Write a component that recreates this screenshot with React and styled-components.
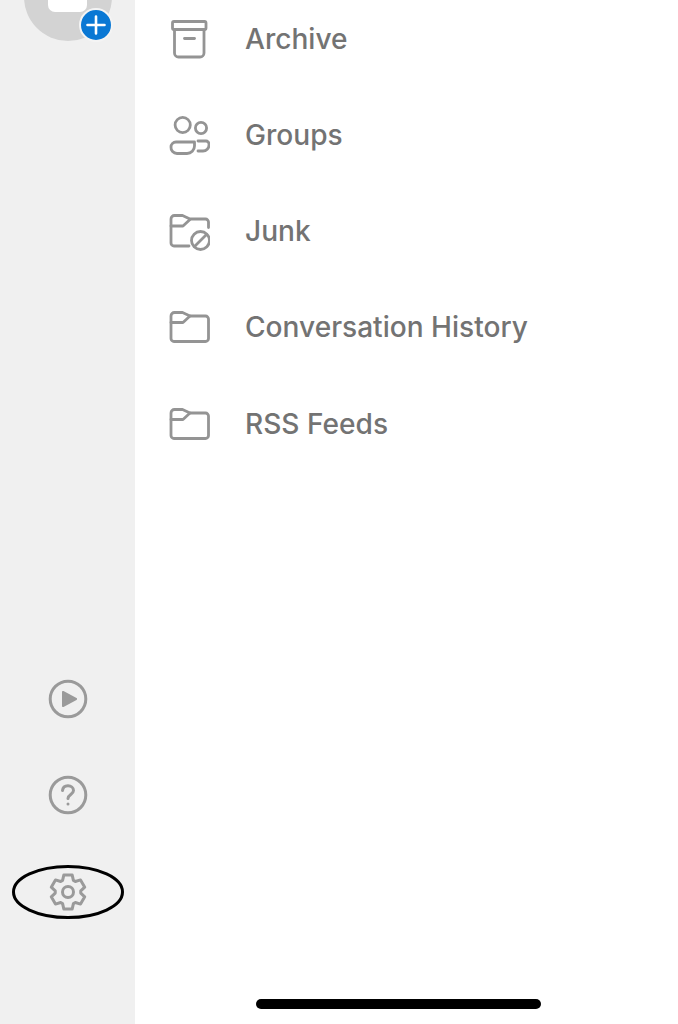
import styled, { createGlobalStyle } from "styled-components";

const GlobalStyle = createGlobalStyle`
  html, body {
    margin: 0;
    padding: 0;
    background: #fff;
  }
  body {
    font-family: Inter, "Liberation Sans", sans-serif;
  }
`;

// six blocky teeth, one pointing straight up
const gearPath = () => {
  const pts = [];
  for (let i = 0; i < 6; i++) {
    const a = -90 + i * 60;
    [[12.8, -25], [17.4, -14], [17.4, 14], [12.8, 25]].forEach(([r, d]) => {
      const t = ((a + d) * Math.PI) / 180;
      pts.push((20 + r * Math.cos(t)).toFixed(2) + " " + (20 + r * Math.sin(t)).toFixed(2));
    });
  }
  return "M" + pts.join("L") + "Z";
};

const ArchiveIcon = () => (
  <Icon viewBox="0 0 42 42">
    <rect x="4.5" y="3.5" width="33.5" height="8" rx="1.5" />
    <path d="M6.5 11.5V35a4 4 0 0 0 4 4H32a4 4 0 0 0 4-4V11.5" />
    <path d="M16.5 20.5h10" />
  </Icon>
);

const GroupsIcon = () => (
  <Icon viewBox="0 0 42 42">
    <circle cx="14.7" cy="11" r="7.6" />
    <circle cx="33" cy="14" r="5.6" />
    <path d="M8 28h18.5v4a7.5 7.5 0 0 1-7.5 7.5H9a6 6 0 0 1-6-6.5A5 5 0 0 1 8 28z" />
    <path d="M30 27h8a3 3 0 0 1 3 3v1a6 6 0 0 1-6 6h-5" />
  </Icon>
);

const JunkIcon = () => (
  <Icon viewBox="0 0 42 42">
    <path d="M21 36H6a3 3 0 0 1-3-3V9a3.5 3.5 0 0 1 3.5-3.500h8l7.500 3.500h15.500a3 3 0 0 1 3 3v5.500" />
    <path d="M3 16h12l7-6.500" />
    <circle cx="32.500" cy="30.500" r="9" />
    <path d="M26.500 36.500l12-12" />
  </Icon>
);

const FolderIcon = () => (
  <Icon viewBox="0 0 42 42">
    <path d="M3 10a3.500 3.500 0 0 1 3.500-3.500h8l7.500 3.500h15.500a3 3 0 0 1 3 3v19.500a3 3 0 0 1-3 3H6a3 3 0 0 1-3-3z" />
    <path d="M3 16.500h12l7-6.500" />
  </Icon>
);

const items = [
  { name: "Archive", icon: <ArchiveIcon /> },
  { name: "Groups", icon: <GroupsIcon /> },
  { name: "Junk", icon: <JunkIcon /> },
  { name: "Conversation History", icon: <FolderIcon /> },
  { name: "RSS Feeds", icon: <FolderIcon /> },
];

export default function App() {
  return (
    <>
      <GlobalStyle />
      <Screen>
        <Sidebar>
          <Avatar>
            <AvatarCard />
            <AddBadge>
              <svg width="20" height="20" viewBox="0 0 20 20">
                <path d="M10 1.500v17M1.500 10h17" stroke="#fff" strokeWidth="2.600" strokeLinecap="round" />
              </svg>
            </AddBadge>
          </Avatar>
          <Tools>
            <Tool>
              <RoundIcon viewBox="0 0 40 40">
                <circle cx="20" cy="20" r="17.800" />
                <path d="M14 13v14a1 1 0 0 0 1.500 .9l13-7a1 1 0 0 0 0-1.800l-13-7a1 1 0 0 0-1.500 .9z" fill="#9a9a9a" stroke="none" />
              </RoundIcon>
            </Tool>
            <Tool>
              <RoundIcon viewBox="0 0 40 40">
                <circle cx="20" cy="20" r="17.800" />
                <path d="M14.500 15.500c.3-3 2.500-4.800 5.500-4.800s5.500 2 5.500 4.800c0 4-5.500 4-5.500 8" />
                <circle cx="20" cy="29" r="1.500" fill="#9a9a9a" stroke="none" />
              </RoundIcon>
            </Tool>
            <Tool>
              <RoundIcon viewBox="0 0 40 40">
                <path d={gearPath()} />
                <circle cx="20" cy="20" r="5.500" />
              </RoundIcon>
              <Highlight viewBox="0 0 112 54">
                <ellipse cx="56" cy="27" rx="54.500" ry="25.500" />
              </Highlight>
            </Tool>
          </Tools>
        </Sidebar>
        <Main>
          <FolderList>
            {items.map((item) => (
              <Row key={item.name}>
                {item.icon}
                <Label>{item.name}</Label>
              </Row>
            ))}
          </FolderList>
          <HomeBar />
        </Main>
      </Screen>
    </>
  );
}

const Screen = styled.div`
  display: flex;
  width: 678px;
  height: 1024px;
  overflow: hidden;
  background: #fff;
`;

const Sidebar = styled.div`
  display: flex;
  flex-direction: column;
  align-items: center;
  flex: 0 0 135px;
  background: #f0f0f0;
  padding-bottom: 112.5px;
  box-sizing: border-box;
`;

const Avatar = styled.div`
  position: relative;
  display: flex;
  justify-content: center;
  width: 88px;
  height: 88px;
  margin-top: -47px;
  border-radius: 50%;
  background: #d3d3d3;
`;

const AvatarCard = styled.div`
  width: 39px;
  height: 38px;
  margin-top: 21px;
  border-radius: 7px;
  background: #fff;
`;

const AddBadge = styled.div`
  position: absolute;
  right: -1px;
  bottom: -1px;
  display: flex;
  align-items: center;
  justify-content: center;
  width: 30px;
  height: 30px;
  border: 2px solid #f4f4f4;
  border-radius: 50%;
  background: #0a78d4;
`;

const Tools = styled.div`
  display: flex;
  flex-direction: column;
  gap: 56.5px;
  margin-top: auto;
`;

const Tool = styled.div`
  position: relative;
  display: flex;
  align-items: center;
  justify-content: center;
  width: 40px;
  height: 40px;
`;

const RoundIcon = styled.svg`
  width: 40px;
  height: 40px;
  fill: none;
  stroke: #9a9a9a;
  stroke-width: 3;
  stroke-linecap: round;
  stroke-linejoin: round;
`;

const Highlight = styled.svg`
  position: absolute;
  left: -36px;
  top: -7px;
  width: 112px;
  height: 54px;
  fill: none;
  stroke: #000;
  stroke-width: 3;
`;

const Main = styled.div`
  display: flex;
  flex: 1;
  flex-direction: column;
  min-width: 0;
`;

const FolderList = styled.div`
  display: flex;
  flex-direction: column;
  margin-top: -9.5px;
  padding-left: 33px;
`;

const Row = styled.div`
  display: flex;
  align-items: center;
  gap: 35px;
  height: 96.25px;
`;

const Icon = styled.svg`
  flex: none;
  width: 42px;
  height: 42px;
  fill: none;
  stroke: #949494;
  stroke-width: 2.8;
  stroke-linecap: round;
  stroke-linejoin: round;
`;

const Label = styled.span`
  font-size: 28.1px;
  font-weight: 500;
  color: #737373;
  white-space: nowrap;
`;

const HomeBar = styled.div`
  flex: none;
  width: 285px;
  height: 10px;
  margin: auto 0 15px 121px;
  border-radius: 5px;
  background: #000;
`;
